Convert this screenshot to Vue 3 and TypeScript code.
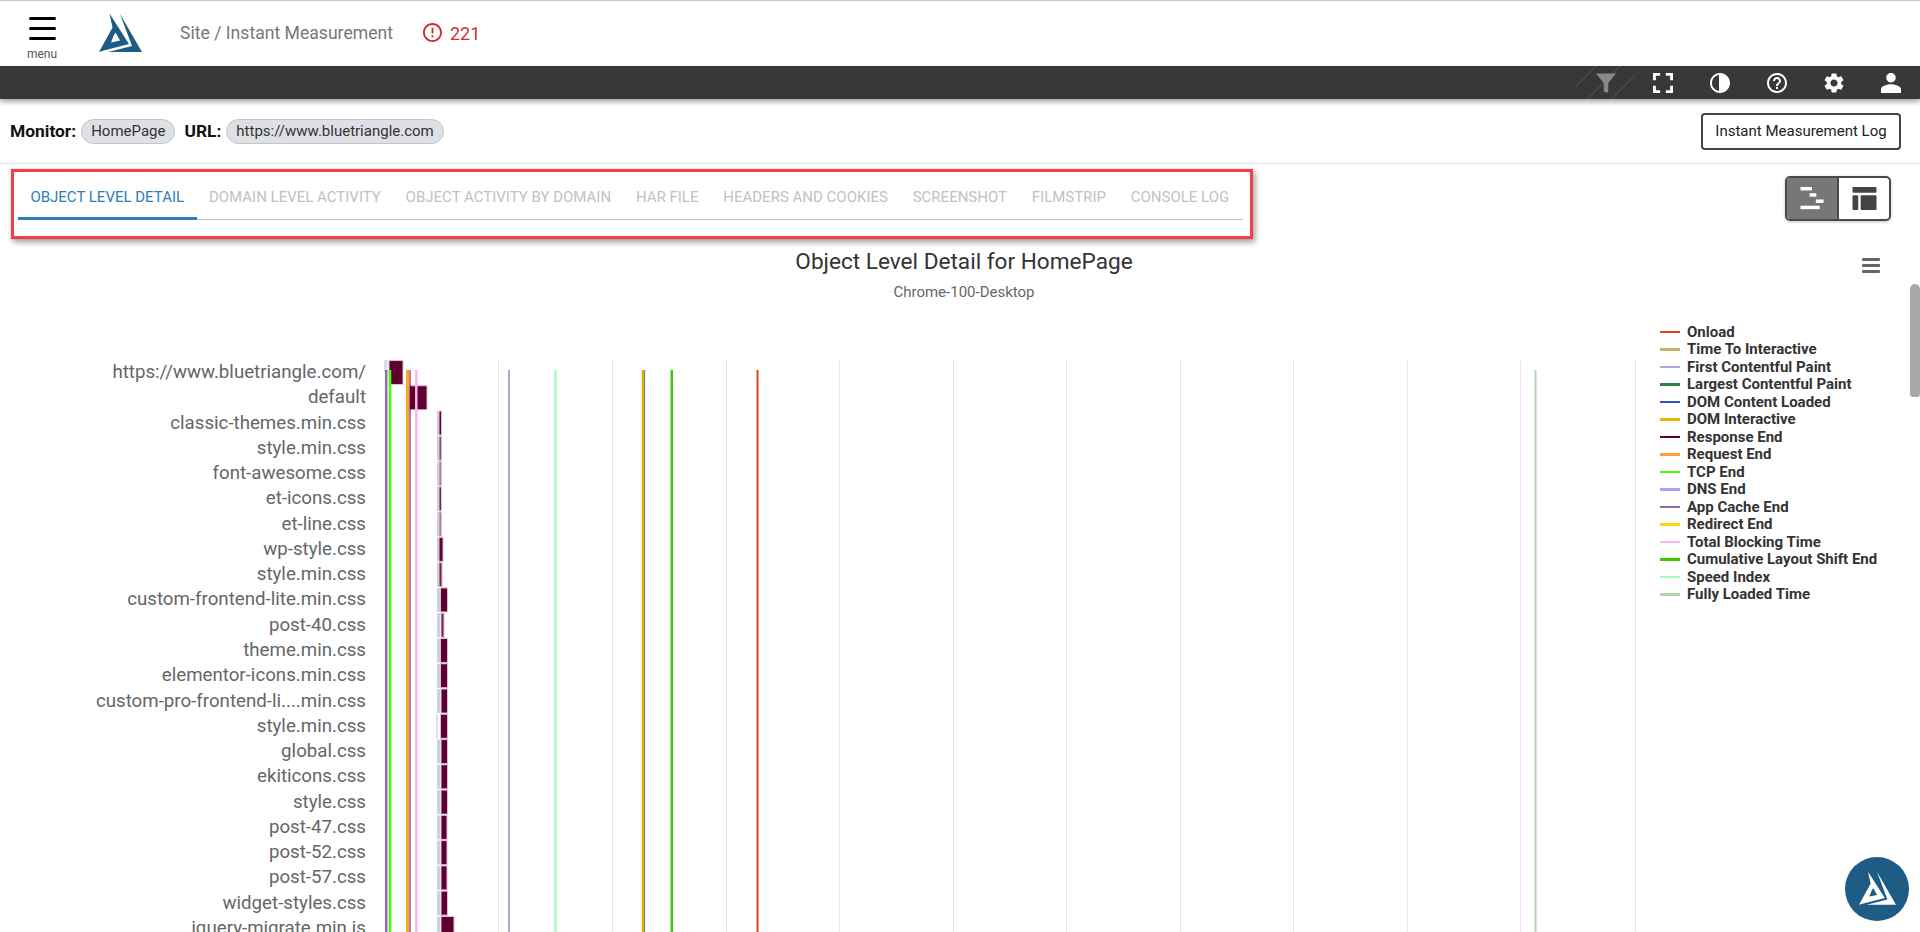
<template>
  <div class="page">
    <header class="top-bar">
      <button class="menu-btn" aria-label="Menu">
        <span class="burger"><i></i><i></i><i></i></span>
        <span class="menu-label">menu</span>
      </button>
      <svg class="logo" viewBox="0 0 43 39" aria-hidden="true">
        <path v-for="d in logoPaths" :key="d" :d="d" fill="#1f5c85" />
      </svg>
      <span class="crumb">Site / Instant Measurement</span>
      <svg class="alert-icon" viewBox="2 2 20 20" aria-hidden="true">
        <path fill="#d32f2f" d="M11 15h2v2h-2zm0-8h2v6h-2zm.99-5C6.47 2 2 6.48 2 12s4.47 10 9.99 10C17.52 22 22 17.52 22 12S17.52 2 11.99 2zM12 20c-4.42 0-8-3.58-8-8s3.58-8 8-8 8 3.58 8 8-3.58 8-8 8z" />
      </svg>
      <span class="alert-count">221</span>
    </header>

    <div class="tool-bar">
      <span class="stripes"></span>
      <span v-for="icon in toolIcons" :key="icon.name" class="tool-icon">
        <svg :viewBox="icon.box" aria-hidden="true">
          <path :fill="icon.color" :d="icon.d" />
        </svg>
      </span>
    </div>

    <div class="info-row">
      <div class="info-left">
        <b>Monitor:</b>
        <span class="chip">HomePage</span>
        <b class="url-label">URL:</b>
        <span class="chip">https://www.bluetriangle.com</span>
      </div>
      <button class="log-btn">Instant Measurement Log</button>
    </div>

    <div class="tabs-row">
      <nav class="tabs">
        <a v-for="(tab, i) in tabs" :key="tab" class="tab" :class="{ active: i === 0 }">{{ tab }}</a>
      </nav>
      <div class="view-toggle">
        <button class="toggle-btn on" aria-label="Waterfall">
          <svg viewBox="0 0 26 26" aria-hidden="true">
            <rect x="0.5" y="1" width="12" height="3.6" fill="#fff" />
            <rect x="10" y="7.5" width="7" height="3.6" fill="#fff" />
            <rect x="16.5" y="14" width="8" height="3.6" fill="#fff" />
            <rect x="0.5" y="20.5" width="20" height="3.6" fill="#fff" />
          </svg>
        </button>
        <button class="toggle-btn" aria-label="Table">
          <svg viewBox="0 0 26 26" aria-hidden="true">
            <rect x="0.5" y="1" width="25" height="6" rx="1" fill="#444" />
            <rect x="0.5" y="9.5" width="6" height="15.5" rx="1" fill="#444" />
            <rect x="9" y="9.5" width="16.5" height="15.5" rx="1" fill="#444" />
          </svg>
        </button>
      </div>
    </div>

    <section class="chart">
      <button class="chart-menu" aria-label="Chart menu"><i></i><i></i><i></i></button>
      <h1 class="chart-title">Object Level Detail for HomePage</h1>
      <div class="chart-sub">Chrome-100-Desktop</div>
      <div class="chart-body">
        <svg class="plot" width="1650" height="650" viewBox="0 0 1650 650">
          <line v-for="x in gridX" :key="x" :x1="x + 0.5" :x2="x + 0.5" y1="0" y2="650" stroke="#e6e6e6" />
          <text v-for="(row, i) in rows" :key="i" class="tick" x="366" :y="rowTop(i) + 18">{{ row.name }}</text>
          <rect x="384" y="0" width="3" height="12" fill="#dcdcf0" />
          <rect x="387" y="0" width="1" height="12" fill="#e4f0d8" />
          <template v-for="(row, i) in rows" :key="'b' + i">
            <rect v-if="row.wait" :x="row.wait[0]" :y="rowTop(i) + 0.5" :width="row.wait[1]" height="24" :fill="row.waitColor || '#c6d4e1'" />
            <rect :x="row.x" :y="rowTop(i) + 0.5" :width="row.w" height="24" fill="#600030" :fill-opacity="row.o || 1" stroke="#d9c3cf" stroke-width="1" />
          </template>
          <line v-for="m in marks" :key="m.x + m.color" :x1="m.x" :x2="m.x" y1="10" y2="650" :stroke="m.color" :stroke-width="m.w" />
        </svg>
        <ul class="legend">
          <li v-for="item in legend" :key="item.label">
            <span class="swatch" :style="{ background: item.color }"></span>{{ item.label }}
          </li>
        </ul>
      </div>
    </section>

    <div class="scroll-thumb"></div>
    <button class="help-fab" aria-label="Help">
      <svg viewBox="0 0 43 39" aria-hidden="true">
        <path v-for="d in logoPaths" :key="d" :d="d" fill="#fff" />
      </svg>
    </button>
  </div>
</template>

<script setup lang="ts">
interface Row {
  name: string;
  x: number;
  w: number;
  o?: number;
  wait?: [number, number];
  waitColor?: string;
}

const logoPaths: string[] = [
  'M21 1 L43 39 L9 39 L33 33 Z',
  'M0 39 L13.5 14.5 L10.5 0.5 L30 31 L5 37.5 Z M14.5 23 L12 29.5 L21 27.5 L16.5 19.5 Z',
];

const toolIcons = [
  { name: 'filter', color: '#8a8a8a', box: '1 1.5 22 22', d: 'M1 2h22l-8.5 10.5V22q-1.5 1.5-3 .8l-2-1v-9.3z' },
  { name: 'fullscreen', color: '#fff', box: '5 5 14 14', d: 'M7 14H5v5h5v-2H7v-3zm-2-4h2V7h3V5H5v5zm12 7h-3v2h5v-5h-2v3zM14 5v2h3v3h2V5h-5z' },
  { name: 'contrast', color: '#fff', box: '2 2 20 20', d: 'M12 2C6.48 2 2 6.48 2 12s4.48 10 10 10 10-4.48 10-10S17.52 2 12 2zm-1 17.93c-3.95-.49-7-3.85-7-7.93s3.05-7.44 7-7.93v15.86z' },
  { name: 'help', color: '#fff', box: '2 2 20 20', d: 'M11 18h2v-2h-2v2zm1-16C6.48 2 2 6.48 2 12s4.48 10 10 10 10-4.48 10-10S17.52 2 12 2zm0 18c-4.41 0-8-3.59-8-8s3.59-8 8-8 8 3.59 8 8-3.59 8-8 8zm0-14c-2.21 0-4 1.79-4 4h2c0-1.1.9-2 2-2s2 .9 2 2c0 2-3 1.75-3 5h2c0-2.25 3-2.5 3-5 0-2.21-1.79-4-4-4z' },
  { name: 'settings', color: '#fff', box: '2.5 2 19 20', d: 'M19.14 12.94c.04-.3.06-.61.06-.94 0-.32-.02-.64-.07-.94l2.03-1.58c.18-.14.23-.41.12-.61l-1.92-3.32c-.12-.22-.37-.29-.59-.22l-2.39.96c-.5-.38-1.03-.7-1.62-.94l-.36-2.54c-.04-.24-.24-.41-.48-.41h-3.84c-.24 0-.43.17-.47.41l-.36 2.54c-.59.24-1.13.57-1.62.94l-2.39-.96c-.22-.08-.47 0-.59.22L2.74 8.87c-.12.21-.08.47.12.61l2.03 1.58c-.05.3-.09.63-.09.94s.02.64.07.94l-2.03 1.58c-.18.14-.23.41-.12.61l1.92 3.32c.12.22.37.29.59.22l2.39-.96c.5.38 1.03.7 1.62.94l.36 2.54c.05.24.24.41.48.41h3.84c.24 0 .44-.17.47-.41l.36-2.54c.59-.24 1.13-.56 1.62-.94l2.39.96c.22.08.47 0 .59-.22l1.92-3.32c.12-.22.07-.47-.12-.61l-2.01-1.58zM12 15.6c-1.98 0-3.6-1.62-3.6-3.6s1.62-3.6 3.6-3.6 3.6 1.62 3.6 3.6-1.62 3.6-3.6 3.6z' },
  { name: 'user', color: '#fff', box: '4 4 16 16', d: 'M12 11.5c2.1 0 3.8-1.7 3.8-3.75S14.1 4 12 4 8.2 5.7 8.2 7.75 9.9 11.5 12 11.5zm0 1.5c-2.67 0-8 1.34-8 4v3h16v-3c0-2.66-5.33-4-8-4z' },
];

const tabs: string[] = [
  'Object Level Detail',
  'Domain Level Activity',
  'Object Activity by Domain',
  'HAR File',
  'Headers and Cookies',
  'Screenshot',
  'Filmstrip',
  'Console Log',
];

const gridX: number[] = [386, 498, 612, 726, 839, 953, 1066, 1180, 1293, 1407, 1520, 1635];

const blue: [number, number] = [437, 3];

const rows: Row[] = [
  { name: 'https://www.bluetriangle.com/', x: 389, w: 14 },
  { name: 'default', x: 409.5, w: 17.5 },
  { name: 'classic-themes.min.css', x: 439, w: 2.5, wait: [437, 2] },
  { name: 'style.min.css', x: 439, w: 2.5, o: 0.7, wait: [437, 2] },
  { name: 'font-awesome.css', x: 439, w: 2.5, o: 0.5, wait: [437, 2] },
  { name: 'et-icons.css', x: 439, w: 2.5, o: 0.85, wait: [437, 2] },
  { name: 'et-line.css', x: 439, w: 2.5, o: 0.5, wait: [437, 2] },
  { name: 'wp-style.css', x: 439, w: 4, wait: [437, 2] },
  { name: 'style.min.css', x: 439, w: 3, o: 0.85, wait: [437, 2] },
  { name: 'custom-frontend-lite.min.css', x: 440.5, w: 7, wait: blue },
  { name: 'post-40.css', x: 441, w: 3, o: 0.85, wait: blue },
  { name: 'theme.min.css', x: 440.5, w: 7, wait: blue },
  { name: 'elementor-icons.min.css', x: 440.5, w: 7, wait: blue },
  { name: 'custom-pro-frontend-li....min.css', x: 441, w: 6.5, wait: blue },
  { name: 'style.min.css', x: 440.5, w: 7, wait: [436, 2], waitColor: '#e4dcec' },
  { name: 'global.css', x: 441, w: 6.5, wait: blue },
  { name: 'ekiticons.css', x: 441, w: 6.5, wait: blue },
  { name: 'style.css', x: 441, w: 6.5, wait: blue },
  { name: 'post-47.css', x: 441, w: 6, wait: blue },
  { name: 'post-52.css', x: 441, w: 6, wait: blue },
  { name: 'post-57.css', x: 441, w: 6, wait: blue },
  { name: 'widget-styles.css', x: 441, w: 6.5, wait: blue },
  { name: 'jquery-migrate.min.js', x: 441, w: 13, wait: blue },
];

const rowTop = (i: number): number => 25.27 * i;

const marks = [
  { x: 386.2, color: '#8e6bb5', w: 2.5 },
  { x: 390, color: '#44ff00', w: 2.5 },
  { x: 407.5, color: '#ffa040', w: 3 },
  { x: 407, color: '#e8b800', w: 1 },
  { x: 410, color: '#600030', w: 1 },
  { x: 416.3, color: '#ffb3f5', w: 2.5 },
  { x: 509, color: '#b8a0e0', w: 2 },
  { x: 555.5, color: '#a5ffb5', w: 2.5 },
  { x: 642.9, color: '#e8b000', w: 2.4 },
  { x: 644.6, color: '#4f7d92', w: 1 },
  { x: 670.5, color: '#a5e890', w: 1 },
  { x: 672, color: '#38c800', w: 2 },
  { x: 757.5, color: '#e04420', w: 2 },
  { x: 1535.5, color: '#b4d4b0', w: 2 },
];

const legend = [
  { label: 'Onload', color: '#e04420' },
  { label: 'Time To Interactive', color: '#c8b070' },
  { label: 'First Contentful Paint', color: '#b8a0e0' },
  { label: 'Largest Contentful Paint', color: '#2e7d4a' },
  { label: 'DOM Content Loaded', color: '#2a55c0' },
  { label: 'DOM Interactive', color: '#e8b800' },
  { label: 'Response End', color: '#600030' },
  { label: 'Request End', color: '#ffa040' },
  { label: 'TCP End', color: '#44ff00' },
  { label: 'DNS End', color: '#a8a0ff' },
  { label: 'App Cache End', color: '#8e6bb5' },
  { label: 'Redirect End', color: '#ffd800' },
  { label: 'Total Blocking Time', color: '#ffb3f5' },
  { label: 'Cumulative Layout Shift End', color: '#38c800' },
  { label: 'Speed Index', color: '#a5ffb5' },
  { label: 'Fully Loaded Time', color: '#b4d4b0' },
];
</script>

<style>
html,
body {
  margin: 0;
  height: 932px;
  overflow: hidden;
  background: #fff;
}
</style>

<style scoped>
.page {
  position: relative;
  height: 932px;
  overflow: hidden;
  font-family: Roboto, sans-serif;
  color: #212121;
}

button {
  font-family: inherit;
  background: none;
  border: none;
  padding: 0;
}

.top-bar {
  height: 65px;
  border-top: 1px solid #d8c0c8;
  display: flex;
  align-items: center;
}

.menu-btn {
  width: 84px;
  height: 65px;
  display: flex;
  flex-direction: column;
  align-items: center;
  padding-top: 16px;
  box-sizing: border-box;
}

.burger {
  width: 27px;
  display: flex;
  flex-direction: column;
  gap: 7px;
}

.burger i {
  height: 3px;
  border-radius: 2px;
  background: #000;
}

.menu-label {
  margin-top: 8px;
  font-size: 12px;
  line-height: 13px;
  color: #555;
}

.logo {
  width: 43px;
  height: 39px;
  margin-left: 15px;
  margin-bottom: 3px;
}

.crumb {
  margin-left: 38px;
  font-size: 17.6px;
  color: #777;
  margin-bottom: 1px;
}

.alert-icon {
  width: 19px;
  height: 19px;
  margin-left: 30px;
  margin-bottom: 3px;
}

.alert-count {
  margin-left: 8px;
  font-size: 18px;
  color: #d32f2f;
}

.tool-bar {
  height: 33px;
  background: #383838;
  box-shadow: 0 3px 5px rgba(0, 0, 0, 0.35);
  display: flex;
  align-items: center;
  justify-content: flex-end;
  gap: 37px;
  padding-right: 19px;
  position: relative;
}

.stripes {
  position: absolute;
  top: 0;
  bottom: 0;
  left: 1575px;
  width: 60px;
  background: repeating-linear-gradient(-45deg, transparent 0 16px, rgba(255, 255, 255, 0.08) 16px 17px);
}

.tool-icon {
  width: 20px;
  height: 20px;
  display: flex;
  position: relative;
}

.tool-icon svg {
  width: 20px;
  height: 20px;
}

.info-row {
  height: 64px;
  border-bottom: 1px solid #e2e2e2;
  display: flex;
  align-items: center;
  justify-content: space-between;
  padding: 0 19px 0 10px;
}

.info-left {
  display: flex;
  align-items: center;
  font-size: 17.4px;
}

.info-left b {
  font-weight: 700;
  color: #111;
}

.url-label {
  margin-left: 9px;
}

.chip {
  margin-left: 5px;
  height: 25px;
  line-height: 23px;
  box-sizing: border-box;
  padding: 0 9px;
  font-size: 15px;
  color: #333;
  background: #dfe0e5;
  border: 1px solid #c4c5ca;
  border-radius: 13px;
}

.log-btn {
  width: 200px;
  height: 37px;
  font-size: 15px;
  color: #222;
  background: #fff;
  border: 2px solid #444;
  border-radius: 4px;
}

.tabs-row {
  display: flex;
  justify-content: space-between;
  align-items: flex-start;
  padding: 5px 29px 0 11px;
}

.tabs {
  width: 1242px;
  height: 70px;
  box-sizing: border-box;
  border: 3px solid #f44040;
  box-shadow: 2px 3px 6px rgba(0, 0, 0, 0.4);
  padding: 5px 7px 0 4px;
  display: flex;
  position: relative;
}

.tab {
  height: 43px;
  line-height: 40px;
  padding: 0 12.4px;
  font-size: 15px;
  text-transform: uppercase;
  color: #bfc1c6;
  box-sizing: border-box;
  border-bottom: 1px solid #c0c0c0;
  white-space: nowrap;
}

.tab:last-child {
  flex: 1;
}

.tab.active {
  color: #2f7db5;
  border-bottom: 3px solid #2f7db5;
}

.view-toggle {
  margin-top: 7px;
  width: 106px;
  height: 45px;
  box-sizing: border-box;
  border: 2px solid #4a4a4a;
  border-radius: 5px;
  display: flex;
  overflow: hidden;
  box-shadow: 0 1px 3px rgba(0, 0, 0, 0.25);
}

.toggle-btn {
  flex: 1;
  display: flex;
  align-items: center;
  justify-content: center;
}

.toggle-btn.on {
  background: #777;
  border-right: 2px solid #4a4a4a;
}

.toggle-btn svg {
  width: 25px;
  height: 25px;
}

.chart {
  position: relative;
  margin-top: 9px;
}

.chart-menu {
  position: absolute;
  top: 10px;
  right: 40px;
  width: 18px;
  display: flex;
  flex-direction: column;
  gap: 3px;
}

.chart-menu i {
  height: 3px;
  border-radius: 1px;
  background: #666;
}

.chart-title {
  margin: 0;
  padding-left: 8px;
  text-align: center;
  font-size: 22.6px;
  line-height: 28px;
  font-weight: 400;
  color: #333;
}

.chart-sub {
  padding-left: 8px;
  margin-top: 7px;
  text-align: center;
  font-size: 15px;
  line-height: 18px;
  color: #666;
}

.chart-body {
  display: flex;
  margin-top: 59px;
}

.plot {
  flex: none;
  display: block;
}

.tick {
  font-family: Roboto, sans-serif;
  font-size: 18.7px;
  fill: #666;
  text-anchor: end;
}

.legend {
  list-style: none;
  margin: -37px 0 0 10px;
  padding: 0;
}

.legend li {
  display: flex;
  align-items: center;
  height: 17.5px;
  font-size: 15px;
  font-weight: 700;
  color: #333;
  white-space: nowrap;
}

.swatch {
  width: 20px;
  height: 2.5px;
  margin-right: 7px;
}

.scroll-thumb {
  position: absolute;
  top: 284px;
  right: 0;
  width: 10px;
  height: 113px;
  background: #a8a9ad;
  border-radius: 5px 5px 3px 3px;
}

.help-fab {
  position: absolute;
  left: 1845px;
  top: 857px;
  width: 64px;
  height: 64px;
  border-radius: 50%;
  background: #1f5c85;
  display: flex;
  align-items: center;
  justify-content: center;
}

.help-fab svg {
  width: 37px;
  height: 34px;
  margin-bottom: 3px;
}
</style>
